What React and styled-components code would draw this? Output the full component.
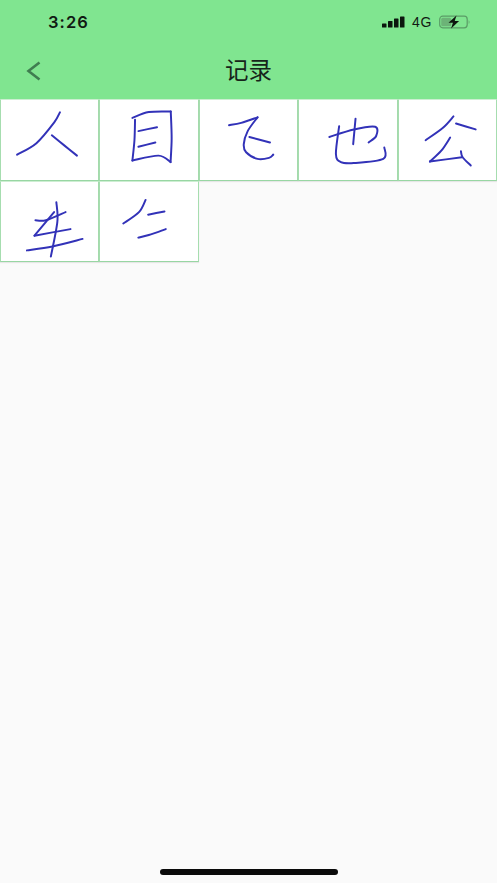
import styled, { createGlobalStyle } from 'styled-components';

const GlobalStyle = createGlobalStyle`
    html, body {
        margin: 0;
        padding: 0;
        background: #fafafa;
        font-family: "Liberation Sans", "Noto Sans CJK SC", sans-serif;
    }
`;

// each record is a list of strokes, each stroke a list of points in a 99x81 cell
const records = [
    [
        [[61, 13.5], [55, 24], [37, 45], [17.3, 56.7]],
        [[52.7, 37], [65, 47], [78.3, 57.7]],
    ],
    [
        [[33.9, 19.3], [50.6, 13.3], [73, 12.7]],
        [[73, 12.7], [73.9, 40], [72.8, 64.3]],
        [[36.6, 21], [36, 42], [33.9, 62.7]],
        [[33.9, 62.7], [60.6, 57.7], [72.8, 64.3]],
        [[40, 32.7], [59, 28.7]],
        [[40, 48.7], [57.3, 44.3]],
    ],
    [
        [[30.5, 26.7], [42.9, 24.3], [59.5, 18.7]],
        [[59.5, 18.7], [49.5, 32.7], [45.5, 46], [47.9, 54.3], [59.5, 61], [71.2, 60], [75.5, 56.7]],
        [[51.2, 38.7], [72.2, 44.3]],
    ],
    [
        [[31.8, 38.7], [56.8, 31], [78.5, 28.3], [79.5, 37.7], [71.8, 44.3]],
        [[58.5, 20], [56.1, 46]],
        [[41.8, 27.7], [38.5, 56], [43.5, 64.3], [56.8, 65.3], [86.8, 61], [87.8, 49.3]],
    ],
    [
        [[56.4, 17.7], [45.7, 29.3], [28, 42]],
        [[59, 25], [79, 31]],
        [[53, 39.3], [44, 52.7], [32.4, 63.7]],
        [[32.4, 63.7], [65, 59.3]],
        [[64, 53.3], [65.7, 59.3], [74, 67.7]],
    ],
    [
        [[36, 40], [46.7, 40], [66.7, 31.7]],
        [[55, 31.7], [35, 55.7]],
        [[35, 55.7], [71.7, 49]],
        [[57.3, 21.7], [58.3, 41.7], [51.7, 77]],
        [[27.3, 70.7], [53.3, 66.7], [84, 59]],
    ],
    [
        [[47.3, 19.3], [40.6, 31.7], [24.6, 43.3]],
        [[49.9, 34.3], [66.6, 31]],
        [[39.9, 57.7], [50.6, 55], [67.9, 49]],
    ],
];

// catmull-rom through the points so the handwriting stays round
const toPath = (pts) => {
    let d = `M${pts[0][0]} ${pts[0][1]}`;
    for (let i = 0; i < pts.length - 1; i++) {
        const p0 = pts[i - 1] || pts[i];
        const p1 = pts[i];
        const p2 = pts[i + 1];
        const p3 = pts[i + 2] || p2;
        const c1x = p1[0] + (p2[0] - p0[0]) / 6;
        const c1y = p1[1] + (p2[1] - p0[1]) / 6;
        const c2x = p2[0] - (p3[0] - p1[0]) / 6;
        const c2y = p2[1] - (p3[1] - p1[1]) / 6;
        d += ` C${c1x} ${c1y} ${c2x} ${c2y} ${p2[0]} ${p2[1]}`;
    }
    return d;
};

const SignalIcon = () => (
    <svg width='23' height='12' viewBox='0 0 23 12'>
        <rect x='0' y='7.5' width='4.5' height='4' rx='0.6' fill='#0c160e' />
        <rect x='6' y='5' width='4.5' height='6.5' rx='0.6' fill='#0c160e' />
        <rect x='12' y='2.5' width='4.5' height='9' rx='0.6' fill='#0c160e' />
        <rect x='18' y='0.5' width='4.5' height='11' rx='0.6' fill='#0c160e' />
    </svg>
);

const BatteryIcon = () => (
    <svg width='32' height='14' viewBox='0 0 32 14'>
        <rect x='0.7' y='1.2' width='27.5' height='11.6' rx='3' fill='none' stroke='#5a9c66' strokeWidth='1.2' />
        <rect x='2.2' y='2.7' width='10' height='8.6' rx='1.5' fill='#6cb377' />
        <path d='M29.7 5.2c1 .4 1 3.2 0 3.6z' fill='#5a9c66' />
        <path d='M17.5 0.5 9.5 7.8h4.4l-1.8 5.7 8-7.6h-4.4z' fill='#0c160e' />
    </svg>
);

const App = () => (
    <>
        <GlobalStyle />
        <Page>
            <Header>
                <StatusBar>
                    <Time>3:26</Time>
                    <StatusIcons>
                        <SignalIcon />
                        <Network>4G</Network>
                        <BatteryIcon />
                    </StatusIcons>
                </StatusBar>
                <NavBar>
                    <BackButton>
                        <svg width='15' height='20' viewBox='0 0 15 20'>
                            <path d='M13.5 1.5 2.5 10l11 8.5' fill='none' stroke='#3f7d50' strokeWidth='2.6' />
                        </svg>
                    </BackButton>
                    <Title>记录</Title>
                </NavBar>
            </Header>
            <Content>
                <RecordGrid>
                    {records.map((strokes, i) => (
                        <RecordCell key={i}>
                            <svg width='100%' height='100%' viewBox='0 0 99 81'>
                                {strokes.map((pts, j) => (
                                    <path
                                        key={j}
                                        d={toPath(pts)}
                                        fill='none'
                                        stroke='#3232b8'
                                        strokeWidth='2'
                                        strokeLinecap='round'
                                    />
                                ))}
                            </svg>
                        </RecordCell>
                    ))}
                </RecordGrid>
            </Content>
            <HomeBar>
                <HomeIndicator />
            </HomeBar>
        </Page>
    </>
);

export default App;

const Page = styled.div`
    display: flex;
    flex-direction: column;
    height: 883px;
    overflow: hidden;
    background: #fafafa;
`;

const Header = styled.header`
    flex-shrink: 0;
    height: 99px;
    background: #80e590;
`;

const StatusBar = styled.div`
    display: flex;
    align-items: center;
    justify-content: space-between;
    height: 44px;
    padding: 0 26px 0 48px;
`;

const Time = styled.span`
    font-family: Inter, "Liberation Sans", sans-serif;
    font-size: 16.5px;
    font-weight: 600;
    letter-spacing: 1.1px;
    color: #111a13;
`;

const StatusIcons = styled.div`
    display: flex;
    align-items: center;
    gap: 7px;
`;

const Network = styled.span`
    font-size: 14px;
    letter-spacing: 0.7px;
    color: #111a13;
`;

const NavBar = styled.div`
    position: relative;
    display: flex;
    align-items: center;
    justify-content: center;
    box-sizing: border-box;
    height: 55px;
    padding-bottom: 6px;
`;

const BackButton = styled.div`
    position: absolute;
    left: 26px;
    top: 17px;
    display: flex;
`;

const Title = styled.h1`
    margin: 0;
    font-family: "Noto Sans CJK SC", sans-serif;
    font-size: 23.5px;
    font-weight: 400;
    color: #16241a;
`;

const Content = styled.main`
    flex: 1;
`;

const RecordGrid = styled.div`
    display: grid;
    grid-template-columns: repeat(5, 1fr);
    grid-auto-rows: 81.5px;
`;

const RecordCell = styled.div`
    box-sizing: border-box;
    background: #fff;
    border: 1px solid #a6ddaf;
    border-top-color: #cdeed2;
    border-bottom-color: #98d6a3;
    box-shadow: 0 1px 1px rgb(0 0 0 / 8%);

    svg {
        display: block;
        margin: -1px;
        filter: blur(0.3px);
    }
`;

const HomeBar = styled.div`
    display: flex;
    justify-content: center;
    flex-shrink: 0;
    height: 14px;
`;

const HomeIndicator = styled.div`
    width: 178px;
    height: 6px;
    border-radius: 3px;
    background: #0a0a0a;
`;
